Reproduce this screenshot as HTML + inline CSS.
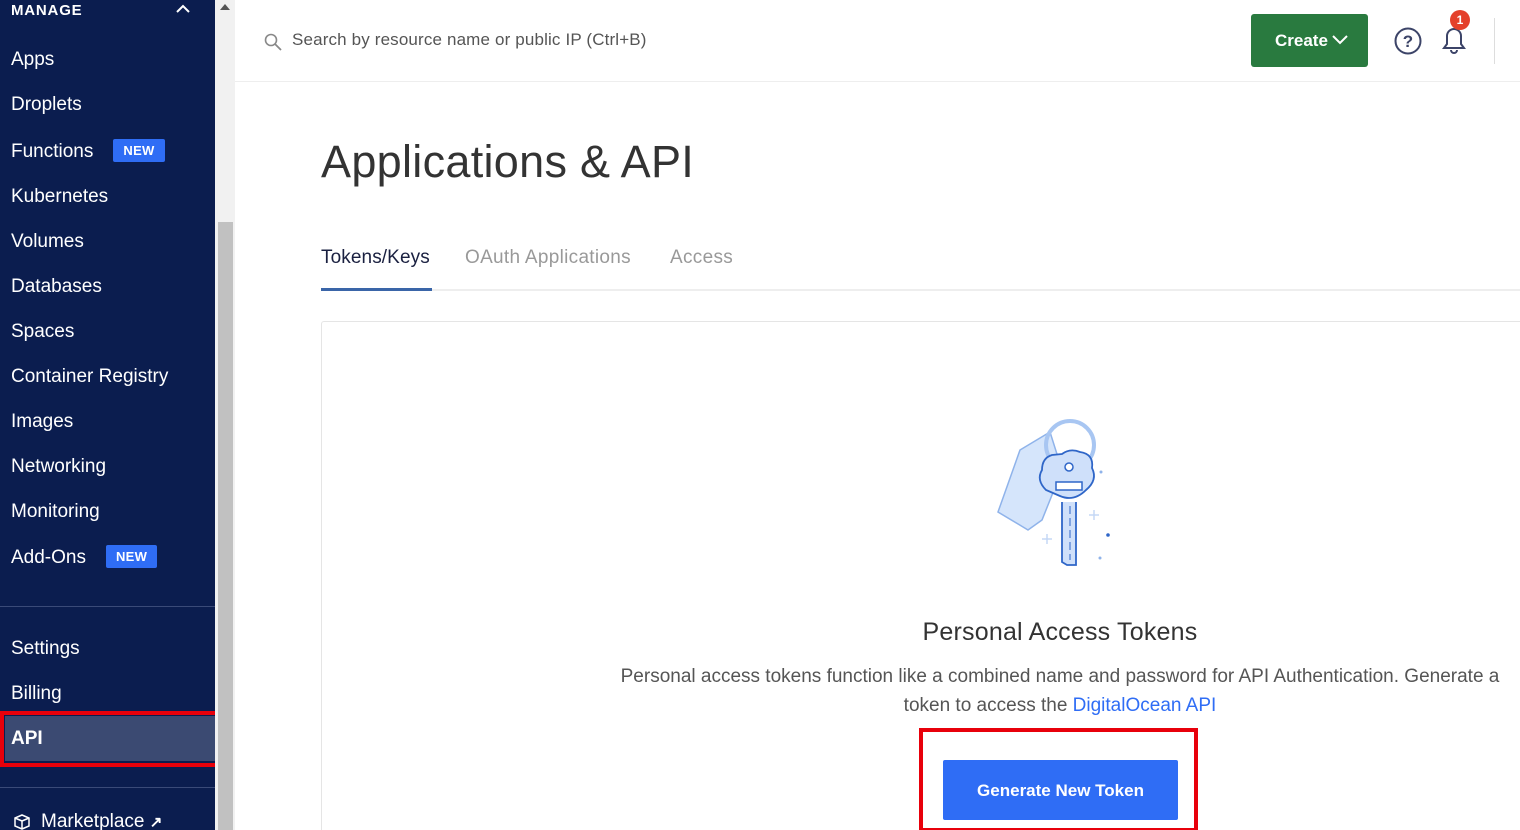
<!DOCTYPE html>
<html><head><meta charset="utf-8"><style>
*{margin:0;padding:0;box-sizing:border-box}
html,body{width:1520px;height:830px;overflow:hidden}
body{background:#fff;font-family:"Liberation Sans",sans-serif;position:relative}
.side{position:absolute;left:0;top:0;width:215px;height:830px;background:#0b1d4f;color:#fff}
.side .it{position:absolute;left:11px;font-size:19px;letter-spacing:0px}
.badge{display:inline-block;background:#2f6df5;color:#fff;font-size:13px;font-weight:bold;padding:4px 10px;border-radius:2px;margin-left:20px;vertical-align:2px;letter-spacing:0.3px}
.sb{position:absolute;left:215px;top:0;width:20px;height:830px;background:#f1f1f1}
.thumb{position:absolute;left:218px;top:222px;width:15px;height:608px;background:#c1c1c1}
.abs{position:absolute}
</style></head><body>
<div class="side">
 <div class="abs" style="left:11px;top:2px;font-size:15px;font-weight:bold;letter-spacing:0.8px">MANAGE</div>
 <svg class="abs" style="left:175px;top:3px" width="16" height="12"><path d="M2 9 L8 3 L14 9" stroke="#fff" stroke-width="2" fill="none"/></svg>
 <div class="it" style="top:49px">Apps</div>
 <div class="it" style="top:94px">Droplets</div>
 <div class="it" style="top:139px">Functions<span class="badge">NEW</span></div>
 <div class="it" style="top:186px">Kubernetes</div>
 <div class="it" style="top:231px">Volumes</div>
 <div class="it" style="top:276px">Databases</div>
 <div class="it" style="top:321px">Spaces</div>
 <div class="it" style="top:366px">Container Registry</div>
 <div class="it" style="top:411px">Images</div>
 <div class="it" style="top:456px">Networking</div>
 <div class="it" style="top:501px">Monitoring</div>
 <div class="it" style="top:545px">Add-Ons<span class="badge">NEW</span></div>
 <div class="abs" style="left:0;top:606px;width:215px;height:1px;background:#3a4a78"></div>
 <div class="it" style="top:638px">Settings</div>
 <div class="it" style="top:683px">Billing</div>
 <div class="abs" style="left:5px;top:716px;width:210px;height:45px;background:#3b4a72"></div>
 <div class="it" style="top:728px;font-weight:bold">API</div>
 <div class="abs" style="left:0;top:787px;width:215px;height:1px;background:#3a4a78"></div>
 <svg class="abs" style="left:12px;top:813px" width="20" height="18"><path d="M10 2 L17 5 L17 13 L10 16 L3 13 L3 5 Z M3 5 L10 8 L17 5 M10 8 L10 16" stroke="#fff" stroke-width="1.5" fill="none"/></svg>
 <div class="it" style="left:41px;top:811px">Marketplace <span style="font-size:15px;font-weight:bold">↗</span></div>
</div>
<div class="abs" style="left:0;top:711px;width:219px;height:56px;border:4px solid #e8000b"></div>
<div class="sb"></div><div class="thumb"></div>
<svg class="abs" style="left:219px;top:3px" width="12" height="8"><path d="M1 7 L6 1 L11 7Z" fill="#555"/></svg>
<div class="abs" style="left:235px;top:81px;width:1285px;height:1px;background:#eee"></div>
<svg class="abs" style="left:263px;top:32px" width="20" height="20"><circle cx="8" cy="8" r="5.5" stroke="#888" stroke-width="1.6" fill="none"/><path d="M12 12 L18 18" stroke="#888" stroke-width="1.8"/></svg>
<div class="abs" style="left:292px;top:30px;font-size:17px;color:#555;letter-spacing:0.15px">Search by resource name or public IP (Ctrl+B)</div>
<div class="abs" style="left:1251px;top:14px;width:117px;height:53px;background:#297a3f;border-radius:3px;color:#fff;font-weight:bold;font-size:17px;line-height:53px;padding-left:24px">Create<svg width="18" height="12" style="margin-left:3px"><path d="M2 2 L9 9 L16 2" stroke="#fff" stroke-width="2" fill="none"/></svg></div>
<svg class="abs" style="left:1393px;top:26px" width="30" height="30"><circle cx="15" cy="15" r="12.5" stroke="#3c4468" stroke-width="2" fill="none"/><text x="15" y="21" text-anchor="middle" font-size="17" font-weight="bold" fill="#3c4468" font-family="Liberation Sans">?</text></svg>
<svg class="abs" style="left:1437px;top:22px" width="34" height="34"><path d="M7 26 L27 26 L24 22 L24 14 A7 7 0 0 0 10 14 L10 22 Z" stroke="#3c4468" stroke-width="2" fill="none"/><path d="M14 28 A3 3 0 0 0 20 28" stroke="#3c4468" stroke-width="2" fill="none"/></svg>
<div class="abs" style="left:1450px;top:10px;width:20px;height:20px;border-radius:50%;background:#e4402b;color:#fff;font-size:12px;font-weight:bold;text-align:center;line-height:20px">1</div>
<div class="abs" style="left:1494px;top:18px;width:1px;height:46px;background:#ddd"></div>
<div class="abs" style="left:321px;top:136px;font-size:45px;color:#333;letter-spacing:0.3px">Applications &amp; API</div>
<div class="abs" style="left:321px;top:247px;font-size:19px;color:#1a2040;letter-spacing:0.1px">Tokens/Keys</div>
<div class="abs" style="left:465px;top:247px;font-size:19px;color:#999;letter-spacing:0.3px">OAuth Applications</div>
<div class="abs" style="left:670px;top:247px;font-size:19px;color:#999;letter-spacing:0.3px">Access</div>
<div class="abs" style="left:321px;top:289px;width:1199px;height:2px;background:#eee"></div>
<div class="abs" style="left:321px;top:288px;width:111px;height:3px;background:#3a65a8"></div>
<div class="abs" style="left:321px;top:321px;width:1210px;height:520px;border:1px solid #e5e5e5;border-radius:3px"></div>
<svg class="abs" style="left:990px;top:410px" width="130" height="165">
 <path d="M30 40 L60 22 L72 60 L52 110 L38 120 L8 102 Z" fill="#d5e5fb" stroke="#8fb3ea" stroke-width="1.5"/>
 <circle cx="80" cy="35" r="24" fill="none" stroke="#a8c6f2" stroke-width="4"/>
 <path d="M62 45 Q52 48 52 60 Q46 70 56 80 L70 86 Q84 92 96 80 Q108 70 102 58 Q104 44 90 42 Q80 38 72 44 Z" fill="#cfe0fa" stroke="#2f66c8" stroke-width="1.8"/>
 <circle cx="79" cy="57" r="4" fill="#fff" stroke="#2f66c8" stroke-width="1.5"/>
 <rect x="66" y="72" width="26" height="8" fill="#fff" stroke="#2f66c8" stroke-width="1.5"/>
 <path d="M72 92 L72 152 L77 155 L86 155 L86 92" fill="#cfe0fa" stroke="#2f66c8" stroke-width="1.8"/>
 <path d="M80 96 L80 150" stroke="#2f66c8" stroke-width="1" stroke-dasharray="8 4"/>
 <circle cx="118" cy="125" r="1.8" fill="#2f66c8"/><circle cx="110" cy="148" r="1.5" fill="#8fb3ea"/><circle cx="111" cy="62" r="1.5" fill="#8fb3ea"/>
 <path d="M104 100 v10 M99 105 h10 M57 124 v10 M52 129 h10" stroke="#c5d8f5" stroke-width="1.5"/>
</svg>
<div class="abs" style="left:0;width:2120px;top:618px;text-align:center;font-size:25px;color:#333;letter-spacing:0.2px">Personal Access Tokens</div>
<div class="abs" style="left:602px;width:916px;top:662px;text-align:center;font-size:19px;color:#555;line-height:29px">Personal access tokens function like a combined name and password for API Authentication. Generate a token to access the <span style="color:#2f6df5">DigitalOcean API</span></div>
<div class="abs" style="left:943px;top:760px;width:235px;height:60px;background:#2f6df5;border-radius:2px;color:#fff;font-weight:bold;font-size:17px;text-align:center;line-height:62px">Generate New Token</div>
<div class="abs" style="left:919px;top:728px;width:279px;height:104px;border:4px solid #e8000b"></div>
</body></html>
